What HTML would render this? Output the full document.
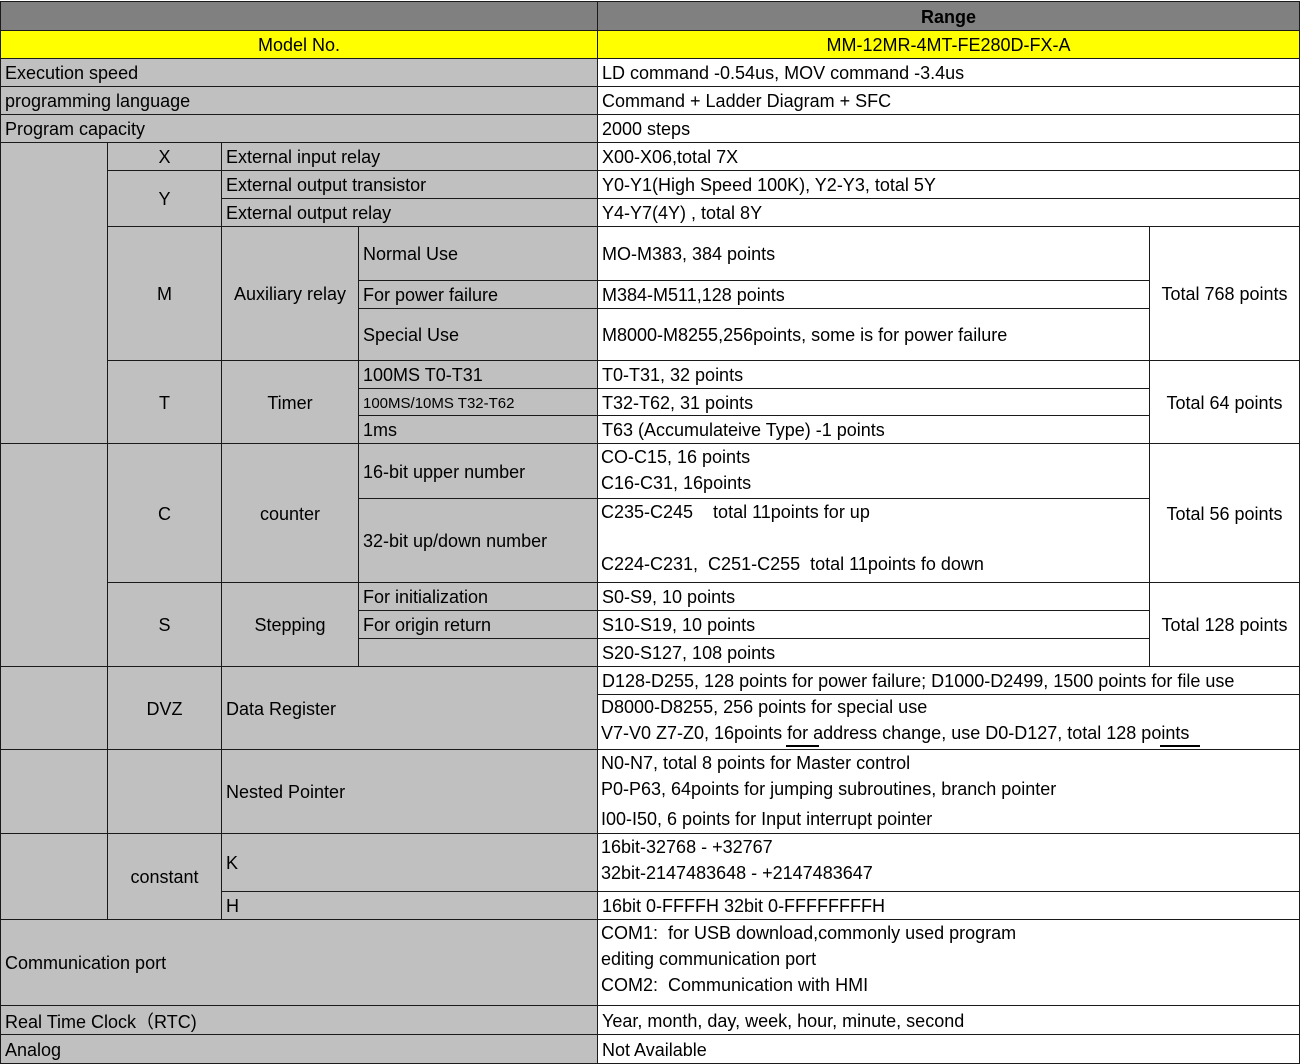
<!DOCTYPE html>
<html><head><meta charset="utf-8"><style>
body{margin:0;width:1301px;height:1064px;background:#fff;position:relative;overflow:hidden;font-family:"Liberation Sans",sans-serif;font-size:18px;color:#000}
.c{position:absolute;border:1px solid #1a1a1a;box-sizing:border-box;display:flex;align-items:center;padding-left:4px;padding-top:2px;white-space:nowrap;overflow:hidden}
.g{background:#c0c0c0}.h{background:#808080}.y{background:#ffff00}
.ct{justify-content:center;padding-left:0}
.t{position:absolute;white-space:nowrap;font-size:18px;line-height:21px}
</style></head><body>
<div class="c h" style="left:0;top:1px;width:598px;height:30px"></div>
<div class="c h ct" style="left:597px;top:1px;width:703px;height:30px;font-weight:bold">Range</div>
<div class="c y ct" style="left:0;top:30px;width:598px;height:29px">Model No.</div>
<div class="c y ct" style="left:597px;top:30px;width:703px;height:29px">MM-12MR-4MT-FE280D-FX-A</div>

<div class="c g" style="left:0;top:58px;width:598px;height:29px">Execution speed</div>
<div class="c" style="left:597px;top:58px;width:703px;height:29px">LD command -0.54us, MOV command -3.4us</div>
<div class="c g" style="left:0;top:86px;width:598px;height:29px">programming language</div>
<div class="c" style="left:597px;top:86px;width:703px;height:29px">Command + Ladder Diagram + SFC</div>
<div class="c g" style="left:0;top:114px;width:598px;height:29px">Program capacity</div>
<div class="c" style="left:597px;top:114px;width:703px;height:29px">2000 steps</div>

<div class="c g" style="left:0;top:142px;width:108px;height:302px"></div>
<div class="c g" style="left:0;top:443px;width:108px;height:224px"></div>
<div class="c g" style="left:0;top:666px;width:108px;height:84px"></div>
<div class="c g" style="left:0;top:749px;width:108px;height:85px"></div>
<div class="c g" style="left:0;top:833px;width:108px;height:87px"></div>

<div class="c g ct" style="left:107px;top:142px;width:115px;height:29px">X</div>
<div class="c g ct" style="left:107px;top:170px;width:115px;height:57px">Y</div>
<div class="c g ct" style="left:107px;top:226px;width:115px;height:135px">M</div>
<div class="c g ct" style="left:107px;top:360px;width:115px;height:84px">T</div>
<div class="c g ct" style="left:107px;top:443px;width:115px;height:140px">C</div>
<div class="c g ct" style="left:107px;top:582px;width:115px;height:85px">S</div>
<div class="c g ct" style="left:107px;top:666px;width:115px;height:84px">DVZ</div>
<div class="c g ct" style="left:107px;top:749px;width:115px;height:85px"></div>
<div class="c g ct" style="left:107px;top:833px;width:115px;height:87px">constant</div>

<div class="c g" style="left:221px;top:142px;width:377px;height:29px">External input relay</div>
<div class="c g" style="left:221px;top:170px;width:377px;height:29px">External output transistor</div>
<div class="c g" style="left:221px;top:198px;width:377px;height:29px">External output relay</div>
<div class="c g ct" style="left:221px;top:226px;width:138px;height:135px">Auxiliary relay</div>
<div class="c g ct" style="left:221px;top:360px;width:138px;height:84px">Timer</div>
<div class="c g ct" style="left:221px;top:443px;width:138px;height:140px">counter</div>
<div class="c g ct" style="left:221px;top:582px;width:138px;height:85px">Stepping</div>
<div class="c g" style="left:221px;top:666px;width:377px;height:84px">Data Register</div>
<div class="c g" style="left:221px;top:749px;width:377px;height:85px">Nested Pointer</div>
<div class="c g" style="left:221px;top:833px;width:377px;height:59px">K</div>
<div class="c g" style="left:221px;top:891px;width:377px;height:29px">H</div>

<div class="c g" style="left:358px;top:226px;width:240px;height:55px">Normal Use</div>
<div class="c g" style="left:358px;top:280px;width:240px;height:29px">For power failure</div>
<div class="c g" style="left:358px;top:308px;width:240px;height:53px">Special Use</div>
<div class="c g" style="left:358px;top:360px;width:240px;height:29px">100MS T0-T31</div>
<div class="c g" style="left:358px;top:388px;width:240px;height:28px;font-size:15px">100MS/10MS T32-T62</div>
<div class="c g" style="left:358px;top:415px;width:240px;height:29px">1ms</div>
<div class="c g" style="left:358px;top:443px;width:240px;height:56px">16-bit upper number</div>
<div class="c g" style="left:358px;top:498px;width:240px;height:85px">32-bit up/down number</div>
<div class="c g" style="left:358px;top:582px;width:240px;height:29px">For initialization</div>
<div class="c g" style="left:358px;top:610px;width:240px;height:29px">For origin return</div>
<div class="c g" style="left:358px;top:638px;width:240px;height:29px"></div>

<div class="c" style="left:597px;top:142px;width:703px;height:29px">X00-X06,total 7X</div>
<div class="c" style="left:597px;top:170px;width:703px;height:29px">Y0-Y1(High Speed 100K), Y2-Y3, total 5Y</div>
<div class="c" style="left:597px;top:198px;width:703px;height:29px">Y4-Y7(4Y) , total 8Y</div>
<div class="c" style="left:597px;top:226px;width:553px;height:55px">MO-M383, 384 points</div>
<div class="c" style="left:597px;top:280px;width:553px;height:29px">M384-M511,128 points</div>
<div class="c" style="left:597px;top:308px;width:553px;height:53px">M8000-M8255,256points, some is for power failure</div>
<div class="c ct" style="left:1149px;top:226px;width:151px;height:135px">Total 768 points</div>
<div class="c" style="left:597px;top:360px;width:553px;height:29px">T0-T31, 32 points</div>
<div class="c" style="left:597px;top:388px;width:553px;height:28px">T32-T62, 31 points</div>
<div class="c" style="left:597px;top:415px;width:553px;height:29px">T63 (Accumulateive Type) -1 points</div>
<div class="c ct" style="left:1149px;top:360px;width:151px;height:84px">Total 64 points</div>
<div class="c" style="left:597px;top:443px;width:553px;height:56px"></div>
<div class="t" style="left:601px;top:447px">CO-C15, 16 points</div>
<div class="t" style="left:601px;top:473px">C16-C31, 16points</div>
<div class="c" style="left:597px;top:498px;width:553px;height:85px"></div>
<div class="t" style="left:601px;top:502px;white-space:pre">C235-C245    total 11points for up</div>
<div class="t" style="left:601px;top:554px;white-space:pre">C224-C231,  C251-C255  total 11points fo down</div>
<div class="c ct" style="left:1149px;top:443px;width:151px;height:140px">Total 56 points</div>
<div class="c" style="left:597px;top:582px;width:553px;height:29px">S0-S9, 10 points</div>
<div class="c" style="left:597px;top:610px;width:553px;height:29px">S10-S19, 10 points</div>
<div class="c" style="left:597px;top:638px;width:553px;height:29px">S20-S127, 108 points</div>
<div class="c ct" style="left:1149px;top:582px;width:151px;height:85px">Total 128 points</div>
<div class="c" style="left:597px;top:666px;width:703px;height:29px">D128-D255, 128 points for power failure; D1000-D2499, 1500 points for file use</div>
<div class="c" style="left:597px;top:694px;width:703px;height:56px"></div>
<div class="t" style="left:601px;top:697px">D8000-D8255, 256 points for special use</div>
<div class="t" style="left:601px;top:723px">V7-V0 Z7-Z0, 16points for address change, use D0-D127, total 128 points</div>
<div style="position:absolute;left:786px;top:745px;width:33px;height:2px;background:#000"></div>
<div style="position:absolute;left:1160px;top:745px;width:40px;height:2px;background:#000"></div>
<div class="c" style="left:597px;top:749px;width:703px;height:85px"></div>
<div class="t" style="left:601px;top:753px">N0-N7, total 8 points for Master control</div>
<div class="t" style="left:601px;top:779px">P0-P63, 64points for jumping subroutines, branch pointer</div>
<div class="t" style="left:601px;top:809px">I00-I50, 6 points for Input interrupt pointer</div>
<div class="c" style="left:597px;top:833px;width:703px;height:59px"></div>
<div class="t" style="left:601px;top:837px">16bit-32768 - +32767</div>
<div class="t" style="left:601px;top:863px">32bit-2147483648 - +2147483647</div>
<div class="c" style="left:597px;top:891px;width:703px;height:29px">16bit 0-FFFFH 32bit 0-FFFFFFFFH</div>

<div class="c g" style="left:0;top:919px;width:598px;height:87px">Communication port</div>
<div class="c" style="left:597px;top:919px;width:703px;height:87px"></div>
<div class="t" style="left:601px;top:923px;white-space:pre">COM1:  for USB download,commonly used program</div>
<div class="t" style="left:601px;top:949px">editing communication port</div>
<div class="t" style="left:601px;top:975px;white-space:pre">COM2:  Communication with HMI</div>
<div class="c g" style="left:0;top:1005px;width:598px;height:30px">Real Time Clock（RTC)</div>
<div class="c" style="left:597px;top:1005px;width:703px;height:30px">Year, month, day, week, hour, minute, second</div>
<div class="c g" style="left:0;top:1034px;width:598px;height:30px">Analog</div>
<div class="c" style="left:597px;top:1034px;width:703px;height:30px">Not Available</div>
</body></html>
